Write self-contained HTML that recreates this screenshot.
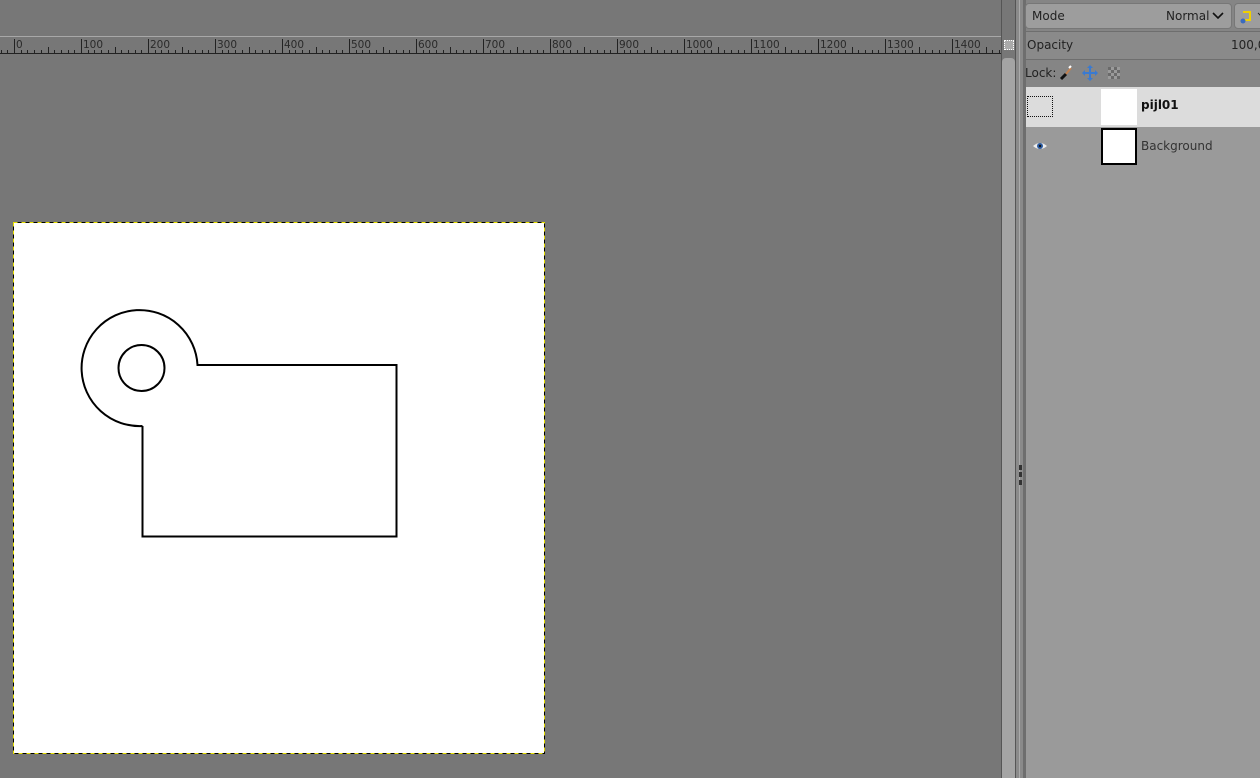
<!DOCTYPE html>
<html><head><style>
body{margin:0;width:1260px;height:778px;background:#777;overflow:hidden;position:relative;font-family:"DejaVu Sans","Liberation Sans",sans-serif;}
.a{position:absolute}
</style></head><body>
<div class="a" style="left:0;top:36px;width:1001px;height:1px;background:#a8a8a8"></div>
<div class="a" style="left:0;top:37px;width:1001px;height:17px;background:#777"></div>
<svg class="a" style="left:0;top:37px" width="1001" height="18" id="ruler">
<line x1="0" y1="16.5" x2="1001" y2="16.5" stroke="#222" stroke-width="1"/>
</svg>
<div class="a" style="left:1004px;top:40px;width:10px;height:10px;border:1px dotted #fff;box-sizing:border-box;background:#aaa"></div>
<div class="a" style="left:13px;top:222px;width:532px;height:532px;background:#fff;"></div>
<svg class="a" style="left:0;top:0" width="1001" height="778">
<rect x="13.5" y="222.5" width="531" height="531" fill="none" stroke="#e8e000" stroke-width="1" stroke-dasharray="4 4"/>
<rect x="13.5" y="222.5" width="531" height="531" fill="none" stroke="#000" stroke-width="1" stroke-dasharray="4 4" stroke-dashoffset="4"/>
<path d="M142.5 426 L142.5 536.5 L396.5 536.5 L396.5 365 L197.5 365 A58 58 0 1 0 142.5 426" fill="none" stroke="#000" stroke-width="2"/>
<circle cx="141.5" cy="368" r="23" fill="none" stroke="#000" stroke-width="2"/>
</svg>
<div class="a" style="left:1001px;top:0;width:1px;height:778px;background:#555"></div>
<div class="a" style="left:1002px;top:58px;width:13px;height:720px;background:#a4a4a4;border-radius:4px 4px 0 0"></div>
<div class="a" style="left:1015px;top:0;width:1px;height:778px;background:#555"></div>
<div class="a" style="left:1016px;top:0;width:10px;height:778px;background:#8a8a8a"></div>
<div class="a" style="left:1019px;top:0;width:1px;height:778px;background:#aaa"></div>
<div class="a" style="left:1023px;top:0;width:3px;height:778px;background:#6e6e6e"></div>
<div class="a" style="left:1019px;top:465px;width:3px;height:5px;background:#333"></div>
<div class="a" style="left:1019px;top:472px;width:3px;height:5px;background:#333"></div>
<div class="a" style="left:1019px;top:480px;width:3px;height:5px;background:#333"></div>
<div class="a" style="left:1026px;top:0;width:234px;height:778px;background:#9a9a9a"></div>
<div class="a" style="left:1026px;top:0;width:234px;height:87px;background:#858585"></div>
<div class="a" style="left:1025px;top:3px;width:207px;height:26px;background:#9d9d9d;border:1px solid #777;border-radius:4px;box-sizing:border-box;font-size:12px;color:#222;line-height:24px">
<span style="position:absolute;left:6px">Mode</span><span style="position:absolute;left:140px">Normal</span>
<svg style="position:absolute;left:186px;top:8px" width="12" height="8"><path d="M1 1L6 6L11 1" fill="none" stroke="#111" stroke-width="1.6"/></svg></div>
<div class="a" style="left:1234px;top:3px;width:30px;height:26px;background:#9d9d9d;border:1px solid #777;border-radius:4px;box-sizing:border-box">
<svg style="position:absolute;left:4px;top:5px" width="22" height="16"><path d="M4 3H11V11H5" fill="none" stroke="#f0d000" stroke-width="2"/><circle cx="4" cy="12" r="2.5" fill="#3a6bc0"/><path d="M19 4l3 3" stroke="#222"/></svg></div>
<div class="a" style="left:1025px;top:31px;width:240px;height:29px;background:#8a8a8a;border:1px solid #6e6e6e;box-sizing:border-box;font-size:12px;color:#222;line-height:27px">
<span style="position:absolute;left:1px">Opacity</span><span style="position:absolute;left:205px">100,0</span></div>
<div class="a" style="left:1025px;top:66px;font-size:12px;color:#222">Lock:</div>
<svg class="a" style="left:1058px;top:64px" width="70" height="18">
<path d="M3 15L8 10" stroke="#111" stroke-width="3"/><path d="M8 10L13 4" stroke="#c08050" stroke-width="2"/><path d="M11 4l2 -2" stroke="#fff" stroke-width="2"/>
<path d="M32 2V16M25 9H39" stroke="#3a7ad0" stroke-width="2"/><path d="M32 1l-3 3h6zM32 17l-3-3h6zM24 9l3-3v6zM40 9l-3-3v6z" fill="#3a7ad0"/>
<g fill="#6a6a6a"><rect x="50" y="3" width="3" height="3"/><rect x="56" y="3" width="3" height="3"/><rect x="53" y="6" width="3" height="3"/><rect x="59" y="6" width="3" height="3"/><rect x="50" y="9" width="3" height="3"/><rect x="56" y="9" width="3" height="3"/><rect x="53" y="12" width="3" height="3"/><rect x="59" y="12" width="3" height="3"/></g>
<g fill="#9a9a9a"><rect x="53" y="3" width="3" height="3"/><rect x="59" y="3" width="3" height="3"/><rect x="50" y="6" width="3" height="3"/><rect x="56" y="6" width="3" height="3"/><rect x="53" y="9" width="3" height="3"/><rect x="59" y="9" width="3" height="3"/><rect x="50" y="12" width="3" height="3"/><rect x="56" y="12" width="3" height="3"/></g>
</svg>
<div class="a" style="left:1026px;top:87px;width:234px;height:40px;background:#dcdcdc"></div>
<div class="a" style="left:1027px;top:96px;width:26px;height:21px;border:1px dotted #111;box-sizing:border-box"></div>
<div class="a" style="left:1101px;top:89px;width:36px;height:36px;background:#fff"></div>
<div class="a" style="left:1141px;top:98px;font-size:12px;font-weight:bold;color:#111">pijl01</div>
<svg class="a" style="left:1032px;top:141px" width="16" height="10"><path d="M1 5Q8 -1 15 5Q8 11 1 5z" fill="#eee"/><circle cx="8" cy="5" r="3" fill="#2a5aa0"/><circle cx="8" cy="5" r="1.2" fill="#111"/></svg>
<div class="a" style="left:1101px;top:128px;width:36px;height:37px;background:#fff;border:2px solid #000;box-sizing:border-box"></div>
<div class="a" style="left:1141px;top:139px;font-size:12px;color:#333">Background</div>
<script>
var s=document.getElementById('ruler'),h='';
for(var u=-20;u<=1480;u+=10){var x=14+u*0.67;if(x<0||x>1001)continue;var len=(u%100==0)?14:(u%50==0)?6:3;
h+='<line x1="'+(Math.round(x)+0.5)+'" y1="'+(16-len)+'" x2="'+(Math.round(x)+0.5)+'" y2="16" stroke="#222" stroke-width="1"/>';
if(u%100==0&&u>=0)h+='<text x="'+(Math.round(x)+2)+'" y="11" font-size="10.5" fill="#2a2a2a" font-family="DejaVu Sans,sans-serif">'+u+'</text>';}
s.insertAdjacentHTML('beforeend',h);
</script>
</body></html>
